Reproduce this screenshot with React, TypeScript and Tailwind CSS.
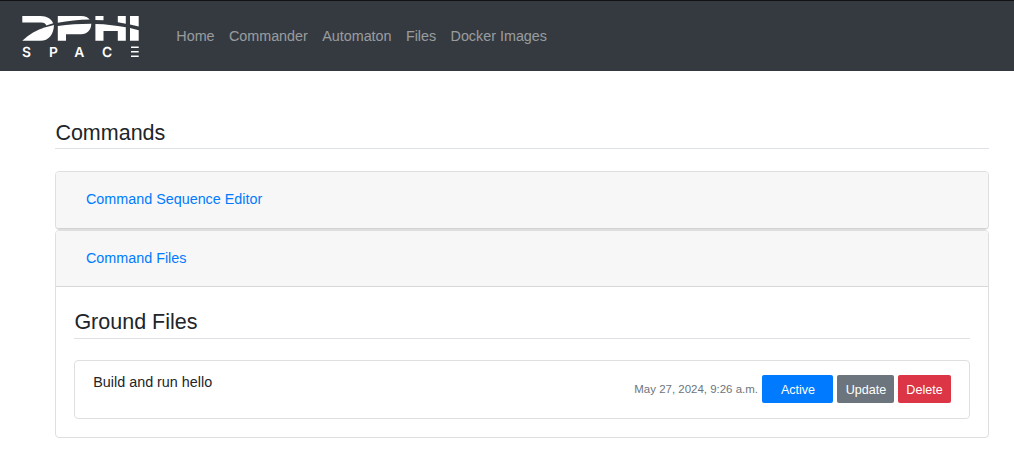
import React from "react";

const links = ["Home", "Commander", "Automaton", "Files", "Docker Images"];

function Logo() {
  return (
    <svg className="block h-[56px] w-[120px] overflow-visible" viewBox="20 8 120 56" fill="#fff" role="img" aria-label="DPHI Space">
      <path d="M22.3 16H40.5C47 16 51.3 19 53.2 23.2L46.3 25.6C45.7 23.4 44 22.5 41.3 22.5H22.3Z" />
      <path d="M22.3 40.7C29 34.3 36.7 29.7 45.5 27.2L54 24.9C53.6 34.5 48.7 40.7 40.5 40.7Z" />
      <path d="M57.8 16H81C85.5 16 88.4 17.5 89.7 19.6C78.5 19.8 68.3 20.9 57.8 22.8Z" />
      <path d="M57.8 26C68.5 24.3 79.5 23.9 91.3 23.8C91.2 30 87.3 34.3 81 34.3H66V40.7H57.8Z" />
      <path d="M95.4 16H103.5V20.3L95.4 20Z" />
      <path d="M95.4 24L103.5 24.3L117.8 25.9L125.8 27.2V40.7H117.8V31H103.5V40.7H95.4Z" />
      <path d="M117.8 16H125.8V23.7L117.8 22.3Z" />
      <path d="M130 16H138.7V26.6L130 24.6Z" />
      <path d="M130 28L138.7 30.2V40.7H130Z" />
      <g fontFamily="Inter, sans-serif" fontSize="13.8" fontWeight="600" textAnchor="middle" textRendering="geometricPrecision">
        <text x="26.6" y="56.6">S</text>
        <text x="53.5" y="56.6">P</text>
        <text x="79.3" y="56.6">A</text>
        <text x="107.2" y="56.6">C</text>
      </g>
      <path d="M131 46.5H138.7V48H131ZM131 51H138.7V52.5H131ZM131 55.4H138.7V56.9H131Z" />
    </svg>
  );
}

function Heading({ children }: { children: React.ReactNode }) {
  return (
    <h4 className="border-b border-[#dee2e6] pl-[0.4px] text-[21.5px] leading-[26px] font-normal">
      {children}
    </h4>
  );
}

export default function App() {
  return (
    <div className="min-h-[461px] bg-white font-['Liberation_Sans',Arial,sans-serif] text-[14.35px] leading-[22px] text-[#212529]">
      <nav className="flex h-[71px] items-center border-t border-[#101214] bg-[#343a40] pl-5">
        <Logo />
        <ul className="ml-[36.3px] flex gap-[14.35px]">
          {links.map((link) => (
            <li key={link}>
              <a href="#" className="text-white/50">{link}</a>
            </li>
          ))}
        </ul>
      </nav>
      <main className="mr-[25px] ml-[55px] pt-[49px]">
        <div className="[&>h4]:h-[29px]">
          <Heading>Commands</Heading>
        </div>
        <section className="mt-[22px] h-[59px] rounded-[4px] border border-[#dfdfdf]">
          <header className="h-full rounded-[3px] border-b border-[#d2d2d2] bg-[#f7f7f7] pt-4 pl-[30px]">
            <a href="#" className="text-[#007bff]">Command Sequence Editor</a>
          </header>
        </section>
        <section className="h-[208px] overflow-hidden rounded-[4px] border border-[#dfdfdf]">
          <header className="h-[56px] border-b border-[#d8d8d8] bg-[#f7f7f7] pt-4 pl-[30px]">
            <a href="#" className="text-[#007bff]">Command Files</a>
          </header>
          <div className="px-[18px] pt-[22px] [&>h4]:h-[30px]">
            <Heading>Ground Files</Heading>
            <div className="mt-[21px] flex h-[59px] justify-between rounded-[4px] border border-[#dfdfdf] px-[18px]">
              <p className="pt-[10px] pl-[0.3px]">Build and run hello</p>
              <div className="mt-[14px] flex h-7 items-center gap-1 text-[12.55px] text-white">
                <small className="text-[11.48px] text-[#6c757d]">May 27, 2024, 9:26 a.m.</small>
                <button className="h-7 w-[71px] rounded-[2px] bg-[#007bff] pt-0.5 pl-px">Active</button>
                <button className="h-7 w-[57px] rounded-[2px] bg-[#6c757d] pt-0.5 pl-px">Update</button>
                <button className="h-7 w-[53px] rounded-[2px] bg-[#dc3545] pt-0.5">Delete</button>
              </div>
            </div>
          </div>
        </section>
      </main>
    </div>
  );
}
